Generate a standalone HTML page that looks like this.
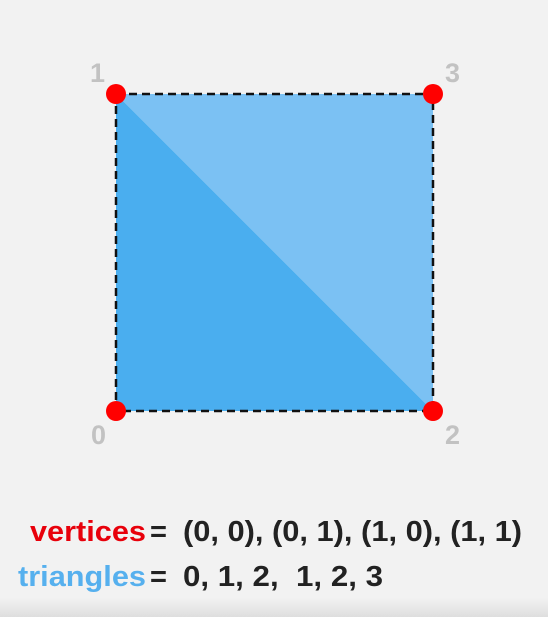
<!DOCTYPE html>
<html><head><meta charset="utf-8"><style>
html,body{margin:0;padding:0;width:548px;height:617px;overflow:hidden;background:#f2f2f2}
</style></head><body>
<svg width="548" height="617" viewBox="0 0 548 617" xmlns="http://www.w3.org/2000/svg">
<defs><linearGradient id="bg" x1="0" y1="0" x2="0" y2="1">
<stop offset="0" stop-color="#f2f2f2"/><stop offset="1" stop-color="#dedede"/></linearGradient></defs>
<rect width="548" height="617" fill="#f2f2f2"/>
<rect y="598" width="548" height="19" fill="url(#bg)"/>
<polygon points="116,94 433,94 433,411" fill="#7bc1f3"/>
<polygon points="116,94 433,411 116,411" fill="#4aaeef"/>
<rect x="116" y="94" width="317" height="317" fill="none" stroke="#111" stroke-width="2.5" stroke-dasharray="8,5"/>
<g fill="#ff0000">
<circle cx="116" cy="94" r="10"/><circle cx="433" cy="94" r="10"/>
<circle cx="116" cy="411" r="10"/><circle cx="433" cy="411" r="10"/>
</g>
<g font-family="Liberation Sans, sans-serif" font-weight="bold" font-size="27" fill="#c2c2c2">
<text x="90" y="82">1</text><text x="445" y="82">3</text>
<text x="91" y="444">0</text><text x="445" y="444">2</text>
</g>
<g font-family="Liberation Sans, sans-serif" font-weight="bold" font-size="29">
<text x="30" y="541" fill="#e8000b" textLength="116" lengthAdjust="spacingAndGlyphs">vertices</text>
<text x="150" y="541" fill="#222">=</text>
<text x="183" y="541" fill="#222" textLength="339" lengthAdjust="spacingAndGlyphs">(0, 0), (0, 1), (1, 0), (1, 1)</text>
<text x="18" y="586" fill="#56b0ee" textLength="128" lengthAdjust="spacingAndGlyphs">triangles</text>
<text x="150" y="586" fill="#222">=</text>
<text x="183" y="586" fill="#222" textLength="200" lengthAdjust="spacingAndGlyphs" xml:space="preserve">0, 1, 2,  1, 2, 3</text>
</g>
</svg>
</body></html>
